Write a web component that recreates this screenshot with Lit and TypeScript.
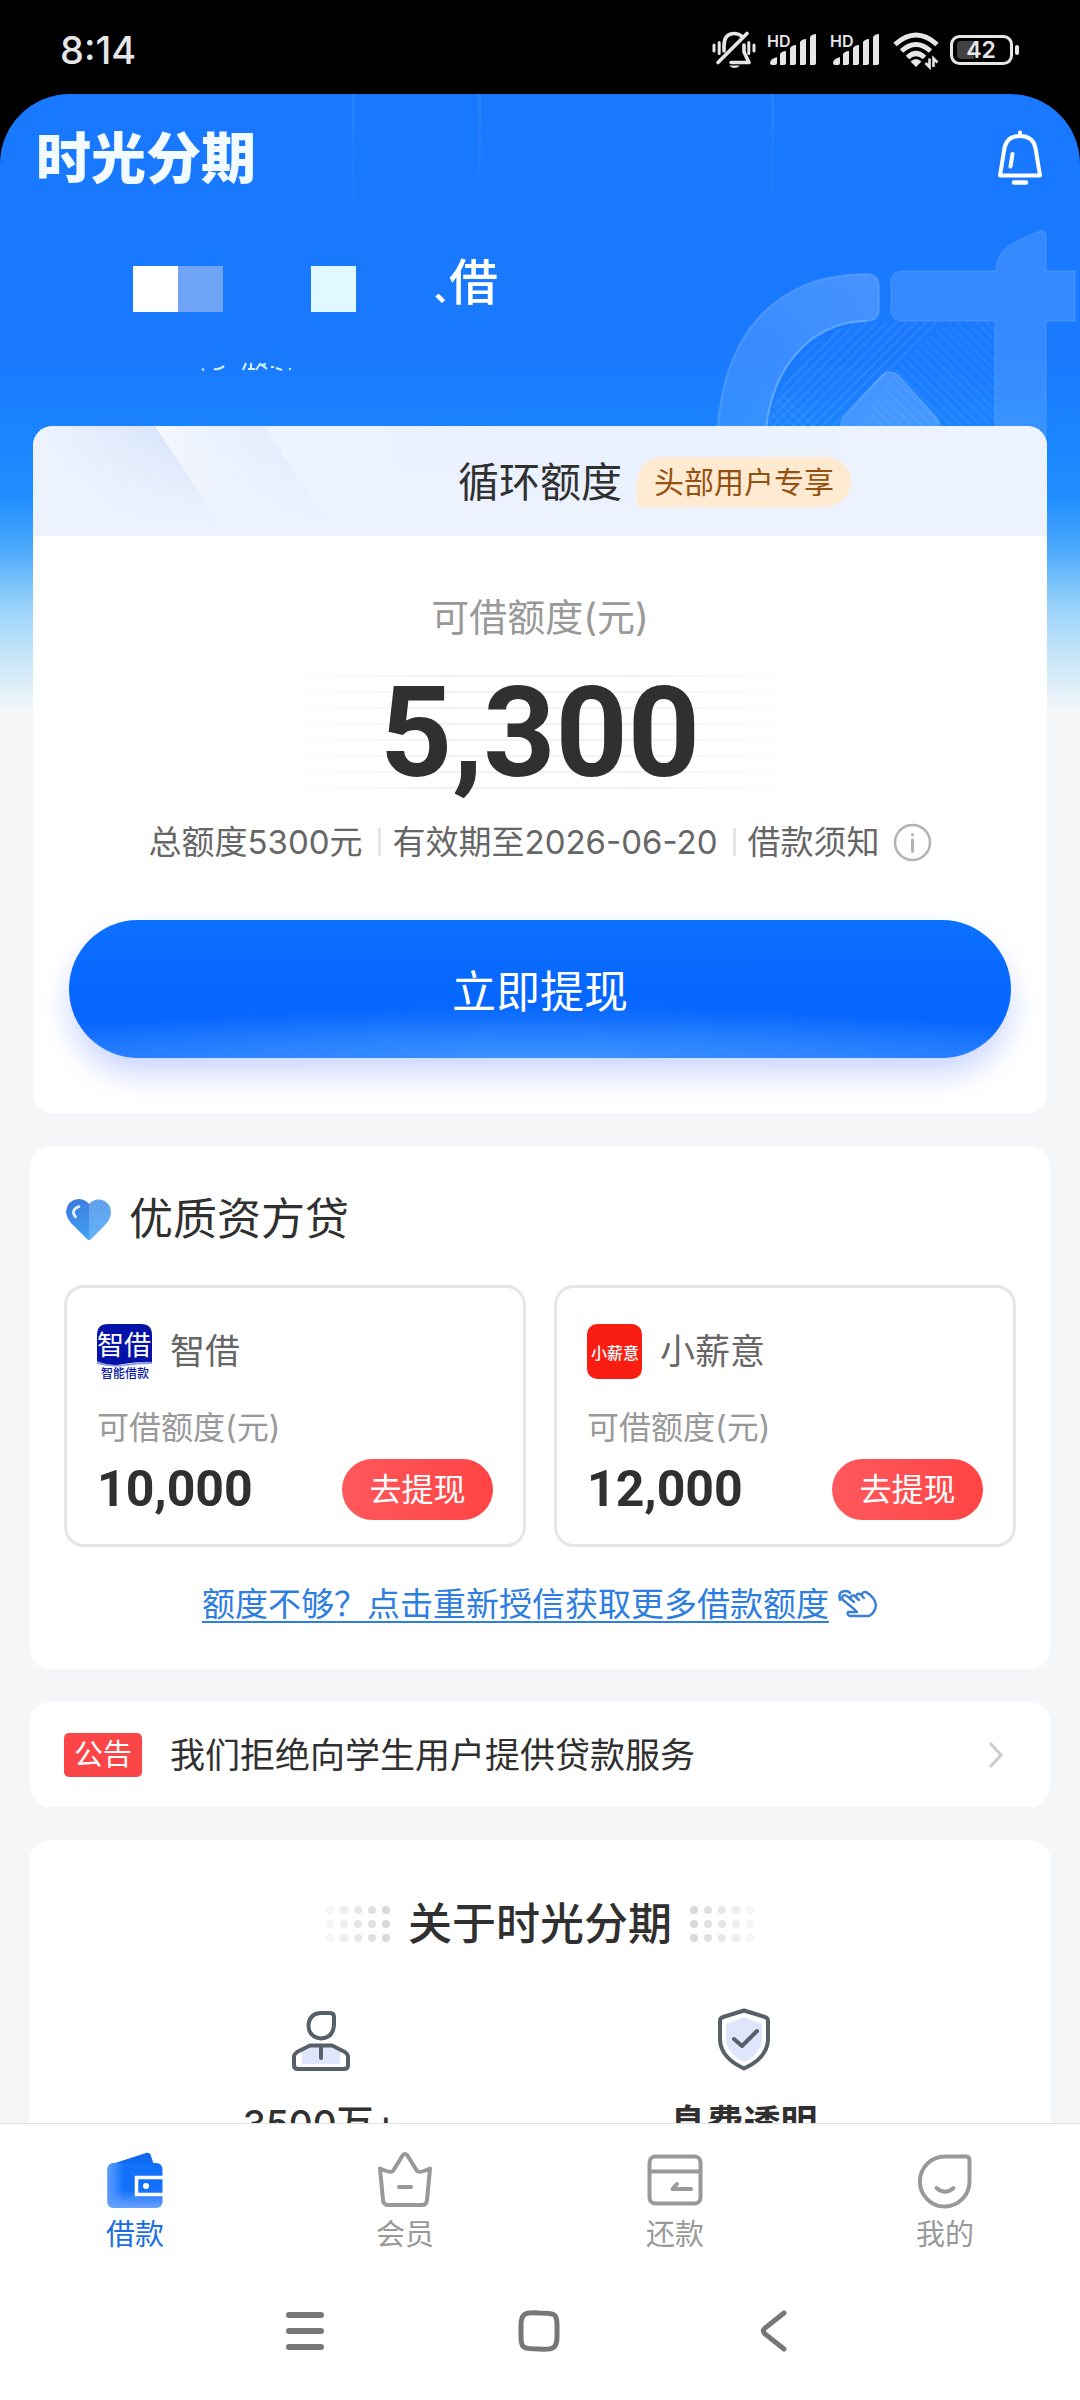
import { LitElement, html, css, svg } from "lit";
import { customElement, property } from "lit/decorators.js";
import { classMap } from "lit/directives/class-map.js";

const base = css`
  * { box-sizing: border-box; }
  button { font: inherit; border: 0; padding: 0; margin: 0; background: none; color: inherit; cursor: pointer; }
  a { color: inherit; text-decoration: none; }
  h1, h2, p { margin: 0; font-weight: inherit; font-size: inherit; }
  svg { display: block; flex: none; overflow: visible; }
`;

@customElement("status-bar")
export class StatusBar extends LitElement {
  static styles = [base, css`
    :host { display: flex; align-items: center; justify-content: space-between; height: 94px; padding: 6px 60px 0 60px; background: #000; color: #e6e6e6; }
    .clock { font-size: 38px; line-height: 48px; font-weight: 500; }
    .icons { display: flex; align-items: center; gap: 11px; }
    .hd { font: 600 16px Inter, sans-serif; fill: #e6e6e6; }
    .level { font: 600 23px Inter, sans-serif; fill: #e6e6e6; text-anchor: middle; }
  `];

  private signal() {
    return html`<svg width="52" height="34" viewBox="0 0 52 34" role="img" aria-label="信号">
      <text class="hd" x="0" y="14">HD</text>
      <g fill="#e6e6e6">
        <path d="M3 30q0-4 7-6v6q0 2-2 2H5q-2 0-2-2z"/>
        <path d="M13 32V21q2-3 6-3v12q0 2-2 2z"/>
        <path d="M23 32V15q2-3 6-3v18q0 2-2 2z"/>
        <path d="M33 32V9q2-3 6-3v24q0 2-2 2z"/>
        <path d="M43 32V4q2-3 6-3v29q0 2-2 2z"/>
      </g>
    </svg>`;
  }

  render() {
    return html`
      <time class="clock">8:14</time>
      <div class="icons">
        <svg width="44" height="38" viewBox="0 0 44 38" role="img" aria-label="静音" fill="none" stroke="#e6e6e6" stroke-width="3.6" stroke-linecap="round" stroke-linejoin="round">
          <path d="M12 20V15Q12 2.500 22 2.500Q27 2.500 30 5.500M32 14v7l5 10.500H19"/>
          <path d="M35 2.500 6 31.500"/>
          <path d="M17 34.500h11q-5.500 5-11 0z" fill="#e6e6e6" stroke="none"/>
          <path d="M2 14v6M7.200 11.500v11M36.800 11.500v11M42 14v6" stroke-width="3"/>
        </svg>
        ${this.signal()}${this.signal()}
        <svg width="46" height="36" viewBox="0 0 46 36" role="img" aria-label="无线网络" fill="none" stroke="#e6e6e6" stroke-width="5">
          <path d="M2 12.500Q23-6.500 44 12.500"/>
          <path d="M8.500 19Q23 6 37.500 19"/>
          <path d="M14.500 25.500Q23 17.500 31.500 25.500"/>
          <path d="M17.500 29.500Q23 24.500 28.500 29.500L23 35z" fill="#e6e6e6" stroke="none"/>
          <path d="M36.500 26.500V35l-4-4M40.500 35v-8.500l4 4" stroke-width="2.600"/>
        </svg>
        <svg width="70" height="32" viewBox="0 0 70 32" role="img" aria-label="电量">
          <rect x="1.500" y="2.500" width="60" height="27" rx="8" fill="none" stroke="#e6e6e6" stroke-width="3"/>
          <path d="M11 7H24V25H11q-4 0-4-4V11q0-4 4-4z" fill="#424242"/>
          <rect x="65" y="11" width="4" height="10" rx="2" fill="#e6e6e6"/>
          <text class="level" x="31" y="24">42</text>
        </svg>
      </div>`;
  }
}

@customElement("lender-card")
export class LenderCard extends LitElement {
  @property() name = "";
  @property() amount = "";
  @property() logo = "";

  static styles = [base, css`
    :host { display: block; min-width: 0; border: 3px solid #e5e5e5; border-radius: 20px; padding: 36px 30px 24px; }
    .head { display: flex; align-items: center; gap: 18px; }
    .name { font-size: 35px; line-height: 55px; color: #666; }
    .label { margin-top: 27px; font-size: 32px; line-height: 44px; color: #999; }
    .foot { display: flex; align-items: center; justify-content: space-between; margin-top: 9px; }
    .amount { font: bold 50px/61px Roboto, sans-serif; color: #303030; }
    .go { width: 151px; height: 61px; border-radius: 31px; background: linear-gradient(90deg, #ff585c, #ff4444); color: #fff; font-size: 32px; line-height: 61px; }
    .brand { font: 400 27px "Noto Sans CJK SC", sans-serif; fill: #fff; text-anchor: middle; }
    .sub { font: 500 12px "Noto Sans CJK SC", sans-serif; fill: #0a1ba8; text-anchor: middle; }
    .mini { font: 500 16px "Noto Sans CJK SC", sans-serif; fill: #fff; text-anchor: middle; }
  `];

  private mark() {
    return this.logo === "blue"
      ? svg`<svg width="55" height="55" viewBox="0 0 55 55" aria-hidden="true">
          <path d="M0 11Q0 0 11 0H44Q55 0 55 11V39Q40 37 27 40T0 38z" fill="#0512a8"/>
          <path d="M0 37Q14 43 30 40T55 38V40Q40 40 28 42T0 40z" fill="#8f9de0"/>
          <text class="brand" x="27" y="31">智借</text>
          <text class="sub" x="28" y="54">智能借款</text>
        </svg>`
      : svg`<svg width="55" height="55" viewBox="0 0 55 55" aria-hidden="true">
          <rect width="55" height="55" rx="10" fill="#fa1e12"/>
          <text class="mini" x="28" y="35">小薪意</text>
        </svg>`;
  }

  render() {
    return html`
      <div class="head">${this.mark()}<h2 class="name">${this.name}</h2></div>
      <p class="label">可借额度(元)</p>
      <div class="foot"><span class="amount">${this.amount}</span><button class="go">去提现</button></div>`;
  }
}

@customElement("tab-bar")
export class TabBar extends LitElement {
  static styles = [base, css`
    :host { display: block; flex: none; background: #fff; border-top: 1px solid #dfe1e3; }
    .tabs { display: grid; grid-template-columns: repeat(4, 1fr); padding: 28px 0 7px; }
    .tab { display: flex; flex-direction: column; align-items: center; gap: 7px; color: #999; font-size: 29px; line-height: 40px; }
    .active { color: #1a6fe0; }
    .system { display: flex; justify-content: center; gap: 178px; height: 138px; align-items: center; padding-right: 2px; }
  `];

  private icons = [
    svg`<svg width="56" height="56" viewBox="0 0 56 56" aria-hidden="true">
      <defs>
        <linearGradient id="w" x1="0" y1="0" x2="0" y2="1"><stop offset="0.600" stop-color="#1271fb"/><stop offset="1" stop-color="#6ba2ff"/></linearGradient>
        <linearGradient id="e" x1="0" y1="0" x2="1" y2="0"><stop offset="0" stop-color="#5e9dff"/><stop offset="0.300" stop-color="#5e9dff" stop-opacity="0"/></linearGradient>
      </defs>
      <path d="M5 12 39 1q4-1 5 3l3 9z" fill="#0f68f0"/>
      <rect y="11" x="0.500" width="55" height="45" rx="6" fill="url(#w)"/>
      <rect y="11" x="0.500" width="55" height="45" rx="6" fill="url(#e)"/>
      <path d="M56 25.500H29.500V42.500H56" fill="none" stroke="#fff" stroke-width="3.500"/>
      <circle cx="39" cy="34" r="3" fill="#fff"/>
    </svg>`,
    svg`<svg width="56" height="56" viewBox="0 0 56 56" aria-hidden="true" fill="none" stroke="#999" stroke-width="4" stroke-linecap="round" stroke-linejoin="round">
      <path d="M3 16.500Q14 21.500 16 19L25.500 3.500q2.500-3 5 0L40 19q2 2.500 13-2.500L50 48q-.5 5-5 5H11q-4.500 0-5-5zM22 35H34"/>
    </svg>`,
    svg`<svg width="56" height="56" viewBox="0 0 56 56" aria-hidden="true" fill="none" stroke="#999" stroke-width="4" stroke-linecap="round" stroke-linejoin="round">
      <rect x="2.500" y="4.500" width="51" height="47" rx="6"/><path d="M3 19.500H53M30 32 25.500 37H44"/>
    </svg>`,
    svg`<svg width="56" height="56" viewBox="0 0 56 56" aria-hidden="true" fill="none" stroke="#999" stroke-width="4" stroke-linecap="round" stroke-linejoin="round">
      <path d="M28 4.500H49q3.500 0 3.500 3.500V29.500A24.800 25 0 1 1 28 4.500zM19.500 36Q28 43.500 36.500 36"/>
    </svg>`,
  ];

  render() {
    const labels = ["借款", "会员", "还款", "我的"];
    return html`
      <nav class="tabs">
        ${labels.map((l, i) => html`<a href="#" class=${classMap({ tab: true, active: i === 0 })}>${this.icons[i]}<span>${l}</span></a>`)}
      </nav>
      <div class="system">
        <button aria-label="最近任务"><svg width="56" height="56" viewBox="0 0 56 56" stroke="#777" stroke-width="6" stroke-linecap="round"><path d="M12 12H44M12 28H44M12 44H44"/></svg></button>
        <button aria-label="主屏幕"><svg width="56" height="56" viewBox="0 0 56 56" fill="none" stroke="#777" stroke-width="5"><path d="M28 10Q39 10 42.500 11.500T46 22V34Q46 42 42.500 44.500T28 46Q17 46 13.500 44.500T10 34V22Q10 14 13.500 11.500T28 10z"/></svg></button>
        <button aria-label="返回"><svg width="56" height="56" viewBox="0 0 56 56" fill="none" stroke="#777" stroke-width="5" stroke-linecap="round"><path d="M39 10 20 25q-3 3 0 6L39 46"/></svg></button>
      </div>`;
  }
}

@customElement("app-root")
export class AppRoot extends LitElement {
  static styles = [base, css`
    :host { display: flex; flex-direction: column; height: 100vh; background: #000; font-family: Inter, "Noto Sans CJK SC", sans-serif; color: #303030; }
    .main { position: relative; flex: 1; min-height: 0; overflow: hidden auto; scrollbar-width: none; border-radius: 70px 70px 0 0;
      display: flex; flex-direction: column;
      background: linear-gradient(180deg, #1878ff 0, #1979ff 42%, #1b85ff 56%, #1f8eff 65%, #4fabfb 74%, #94d0fa 82%, #c3e4f8 90%, #f5f7f9 100%) no-repeat 0 0 / 100% 620px, #f5f6f8; }
    .beams { position: absolute; top: 0; left: 0; width: 100%; height: 130px; display: grid; grid-template-columns: 355fr 126fr 293fr 306fr; }
    .beam { border-right: 3px solid; border-image: linear-gradient(rgba(255,255,255,.07), transparent) 1; }
    .beam:last-child { border: 0; }
    .mark { position: absolute; top: 131px; right: 0; }
    .top { position: relative; display: flex; flex: none; align-items: center; justify-content: space-between; height: 128px; padding: 0 36px 0 36px; }
    .logo { font-size: 55px; line-height: 60px; font-weight: 900; color: #f2fbff; }
    .hello { position: relative; display: flex; flex: none; align-items: flex-end; margin-top: 36px; height: 54px; padding-left: 133px; color: #fff; }
    .tile { width: 45px; height: 46px; background: #fff; }
    .tile-dim { background: #6fa3f3; }
    .tile-cyan { background: #e0f9ff; margin-left: 88px; }
    .greet { display: flex; align-items: baseline; align-self: flex-start; margin-left: 78px; font-size: 49px; line-height: 50px; font-weight: 500; white-space: nowrap; }
    .comma { font-size: 30px; font-weight: 700; font-feature-settings: "halt"; }
    .cut { position: relative; margin: 50px 0 0 200px; }
    .panel { position: relative; flex: none; background: #fff; border-radius: 20px; margin: 33px 30px 0; }
    .quota { margin: 55px 33px 0; padding-bottom: 55px; overflow: hidden; text-align: center; }
    .band { display: grid; grid-template-columns: 1fr auto 1fr; align-items: center; height: 110px; padding-top: 2px;
      background: linear-gradient(180deg, transparent, #ecf2fe 90%), linear-gradient(56deg, transparent 0 6%, #d9e5fc 18%, #f3f7ff 18%, #e3ecfe 28%, transparent 28%), linear-gradient(90deg, #eff4ff, #e9f1fe 60%, #edf4ff); }
    .band-title { grid-column: 2; font-size: 41px; line-height: 60px; }
    .badge { justify-self: start; margin-left: 15px; padding: 0 17px; border-radius: 25px 25px 25px 4px; background: #fee9d1; color: #95510f; font-size: 30px; line-height: 50px; }
    .label { margin-top: 56px; font-size: 38px; line-height: 50px; color: #999; }
    .amount { position: relative; display: grid; place-items: center; margin-top: 33px; height: 116px; font: bold 126px/116px Roboto, sans-serif; color: #303030; }
    .rules { grid-area: 1 / 1; width: 540px; height: 116px; background: repeating-linear-gradient(180deg, #f2f2f2 0 2px, transparent 2px 16px);
      mask-image: linear-gradient(90deg, transparent, #000 35% 65%, transparent); -webkit-mask-image: linear-gradient(90deg, transparent, #000 35% 65%, transparent); }
    .value { grid-area: 1 / 1; position: relative; }
    .facts { display: flex; justify-content: center; align-items: center; margin-top: 31px; font-size: 33px; line-height: 40px; color: #666; white-space: nowrap; }
    .fact + .fact { margin-left: 15px; padding-left: 15px; background: linear-gradient(#e4e4e4, #e4e4e4) no-repeat 0 50% / 3px 28px; }
    .info { margin-left: 13px; }
    .cta { display: block; width: calc(100% - 72px); height: 138px; margin: 58px 36px 0; border-radius: 69px; color: #fff; font-size: 44px;
      background: radial-gradient(60% 42% at 50% 104%, #3b93ff, transparent), linear-gradient(180deg, #0c70ff, #0667ff 50%, #0766ff 72%, #2279ff);
      box-shadow: 0 16px 28px rgba(60, 100, 255, .26); }
    .funds { padding: 43px 34px; }
    .row-title { display: flex; align-items: center; gap: 17px; font-size: 44px; line-height: 60px; }
    .lenders { display: grid; grid-template-columns: 1fr 1fr; gap: 28px; margin-top: 36px; }
    .more { display: flex; justify-content: center; align-items: center; gap: 9px; margin-top: 35px; font-size: 33px; line-height: 44px; color: #2c7ee0; white-space: nowrap; }
    .more-text { text-decoration: underline; text-underline-offset: 5px; text-decoration-thickness: 2px; }
    .notice { display: flex; align-items: center; height: 105px; padding: 0 46px 0 34px; }
    .tag { padding: 0 10px; border-radius: 5px; background: #fc4547; color: #fff; font-size: 29px; line-height: 44px; }
    .notice-text { flex: 1; margin-left: 28px; font-size: 35px; line-height: 48px; }
    .about { padding: 54px 95px 80px 79px; }
    .about-title { display: flex; justify-content: center; align-items: center; gap: 19px; margin-left: 16px; font-size: 44px; line-height: 60px; font-weight: 500; }
    .flip { transform: scaleX(-1); }
    .points { display: grid; grid-template-columns: 1fr 1fr; margin-top: 54px; }
    .point { display: flex; flex-direction: column; align-items: center; gap: 27px; font-size: 37px; line-height: 50px; font-weight: 500; }
    .point-name { font-weight: 700; }
  `];

  private dots(cls: string) {
    return html`<svg class=${cls} width="64" height="36" viewBox="0 0 64 36" fill="#d8d8d8" aria-hidden="true">
      ${[0, 1, 2, 3, 4].map((c) => [0, 1, 2].map((r) => svg`<circle cx=${5 + c * 14} cy=${4 + r * 14} r="4" opacity=${0.25 + c * 0.18}/>`))}
    </svg>`;
  }

  render() {
    return html`
      <status-bar></status-bar>
      <main class="main">
        <div class="beams" aria-hidden="true"><i class="beam"></i><i class="beam"></i><i class="beam"></i><i class="beam"></i></div>
        <svg class="mark" width="363" height="300" viewBox="717 225 363 300" aria-hidden="true">
          <defs>
            <pattern id="up" width="7" height="7" patternUnits="userSpaceOnUse" patternTransform="rotate(45)"><path d="M0 0V7" stroke="#fff" stroke-opacity=".11" stroke-width="3"/></pattern>
            <pattern id="down" width="7" height="7" patternUnits="userSpaceOnUse" patternTransform="rotate(-45)"><path d="M0 0V7" stroke="#fff" stroke-opacity=".08" stroke-width="3"/></pattern>
            <linearGradient id="arc" x1="1" y1="0" x2="0" y2="1"><stop offset="0" stop-color="#fff" stop-opacity=".2"/><stop offset="1" stop-color="#fff" stop-opacity=".1"/></linearGradient>
          </defs>
          <path d="M944 322 808 458H765Q765 420 783 386Q815 325 872 322z" fill="url(#up)"/>
          <path d="M944 322H995V460H840L890 376z" fill="url(#down)"/>
          <path d="M783 386 840 445H765Q765 415 783 386z" fill="url(#down)"/>
          <path d="M717 450C717 330 780 274 866 274Q879 274 879 287V309Q879 321 866 321C810 321 765 370 765 450z" fill="url(#arc)" stroke="#fff" stroke-opacity=".14" stroke-width="2"/>
          <path d="M765 450C765 370 810 322 866 321" fill="none" stroke="#7cbcff" stroke-opacity=".5" stroke-width="2"/>
          <path d="M903 271H996C996 247 1016 241 1040 231Q1046 230 1046 236V271H1075V321H1046V450H995V321H903Q891 321 891 309V283Q891 271 903 271z" fill="#fff" fill-opacity=".13" stroke="#fff" stroke-opacity=".08" stroke-width="2"/>
          <path d="M881 376q9-8 18 0L936 417q7 8 0 17H844q-7-9 0-17z" fill="#fff" fill-opacity=".18" stroke="#fff" stroke-opacity=".12" stroke-width="2"/>
        </svg>

        <header class="top">
          <h1 class="logo">时光分期</h1>
          <button aria-label="消息"><svg width="48" height="58" viewBox="0 0 48 58" fill="none" stroke="#fff" stroke-width="4" stroke-linecap="round" stroke-linejoin="round">
            <path d="M24 3.500V7M24 7Q37 7 39.500 19L44 46.500H4L8.500 19Q11 7 24 7zM16.500 25 14.500 37.500"/><path d="M18 53.500H30" stroke-width="4.500"/>
          </svg></button>
        </header>
        <div class="hello">
          <i class="tile"></i><i class="tile tile-dim"></i><i class="tile tile-cyan"></i>
          <p class="greet"><span class="comma">、</span><span>借</span></p>
        </div>
        <svg class="cut" width="94" height="9" viewBox="0 0 94 9" fill="none" stroke="#d4f3ff" stroke-width="2" aria-hidden="true">
          <path d="M2 8l2-1M14 7q6 1 10-3M43 8 46 1M48 7h7M51 1v6M56 8 60 2q4 2 7 5M62 3l4-1M76 6l6 2"/><path d="M71 5h3M89 7h2"/>
        </svg>

        <section class="panel quota">
          <div class="band">
            <h2 class="band-title">循环额度</h2>
            <span class="badge">头部用户专享</span>
          </div>
          <p class="label">可借额度(元)</p>
          <div class="amount"><i class="rules"></i><span class="value">5,300</span></div>
          <div class="facts">
            <span class="fact">总额度5300元</span><span class="fact">有效期至2026-06-20</span><span class="fact">借款须知</span>
            <svg class="info" width="39" height="39" viewBox="0 0 39 39" fill="none" stroke="#b3b3b3" stroke-width="2.500" stroke-linecap="round" aria-hidden="true">
              <circle cx="19.500" cy="19.500" r="17.500"/><path d="M19.500 17V28.500M19.500 11.500v.5" stroke-width="3"/>
            </svg>
          </div>
          <button class="cta">立即提现</button>
        </section>

        <section class="panel funds">
          <h2 class="row-title">
            <svg width="48" height="44" viewBox="0 0 48 44" aria-hidden="true">
              <defs><linearGradient id="h" x1="0" y1="0" x2="0.600" y2="1"><stop offset="0" stop-color="#3c78dc"/><stop offset="1" stop-color="#40a4f6"/></linearGradient></defs>
              <path d="M25 7Q31 1 38 3Q47 6 47 16Q46 23 41 28L27 42Q25 44 23 42L7 26Q2 20 2 14Q4 3 14 2Q21 2 25 7z" fill="url(#h)"/>
              <path d="M25 7Q31 1 38 3Q47 6 47 16Q46 23 41 28L27 42L25 43z" fill="#a5cdf8" opacity=".35"/>
              <path d="M15 9.500Q6 13 11.500 20" fill="none" stroke="#e8f3ff" stroke-width="2.600" stroke-linecap="round"/>
            </svg>优质资方贷
          </h2>
          <div class="lenders">
            <lender-card name="智借" amount="10,000" logo="blue"></lender-card>
            <lender-card name="小薪意" amount="12,000" logo="red"></lender-card>
          </div>
          <a class="more" href="#"><span class="more-text">额度不够？点击重新授信获取更多借款额度</span>
            <svg width="40" height="30" viewBox="0 0 40 30" fill="none" stroke="#3a7fd6" stroke-width="2.400" stroke-linecap="round" stroke-linejoin="round" aria-hidden="true">
              <path d="M16 20 5 11Q3 8 5.500 6.500Q7.500 5.500 9.500 7.500L16 13M13 9.500Q12 6 16 6.500L21 11M18.500 7.500Q18 4 22 5L26 9M24 5.500Q24.500 2 29 3.500Q37 9 38 16Q37 24 31 27H12Q8.500 26 10 23H19L16 20M2 11Q-.5 2 8 2Q10.500 2 12 4"/>
            </svg>
          </a>
        </section>

        <a class="panel notice" href="#">
          <span class="tag">公告</span>
          <span class="notice-text">我们拒绝向学生用户提供贷款服务</span>
          <svg width="16" height="28" viewBox="0 0 16 28" fill="none" stroke="#ccc" stroke-width="3" aria-hidden="true"><path d="M2 2 13 14 2 26"/></svg>
        </a>

        <section class="panel about">
          <h2 class="about-title">${this.dots("")}关于时光分期${this.dots("flip")}</h2>
          <div class="points">
            <div class="point">
              <svg width="60" height="64" viewBox="0 0 60 64" fill="none" stroke="#575f69" stroke-width="4" stroke-linejoin="round" stroke-linecap="round" aria-hidden="true">
                <path d="M11 43Q22 34 30 36T49 43V56H11z" fill="#dfe6fb" stroke="none"/>
                <path d="M29 5H39q4 0 4 4V17Q42 30 30 30.500Q18 29 17.500 18Q18 6 29 5zM19 37.500H41L54 44Q56.500 46 57 48V57q0 4-4 4H7q-4 0-4-4V48Q3.500 46 6 44zM30 39V50"/>
              </svg><span>3500万+</span>
            </div>
            <div class="point">
              <svg width="60" height="64" viewBox="0 0 60 64" fill="none" stroke="#575f69" stroke-width="4" stroke-linejoin="round" stroke-linecap="round" aria-hidden="true">
                <path d="M30 9 48 16V33Q46 46 30 54Q14 46 12 33V16z" fill="#dfe6fb" stroke="none"/>
                <path d="M30 2.500 51 9q3 1 3 4V32Q53 50 30 60.500Q7 50 6 32V13q0-3 3-4zM20 31l8 7 15-15"/>
              </svg><span class="point-name">息费透明</span>
            </div>
          </div>
        </section>
      </main>
      <tab-bar></tab-bar>`;
  }
}
